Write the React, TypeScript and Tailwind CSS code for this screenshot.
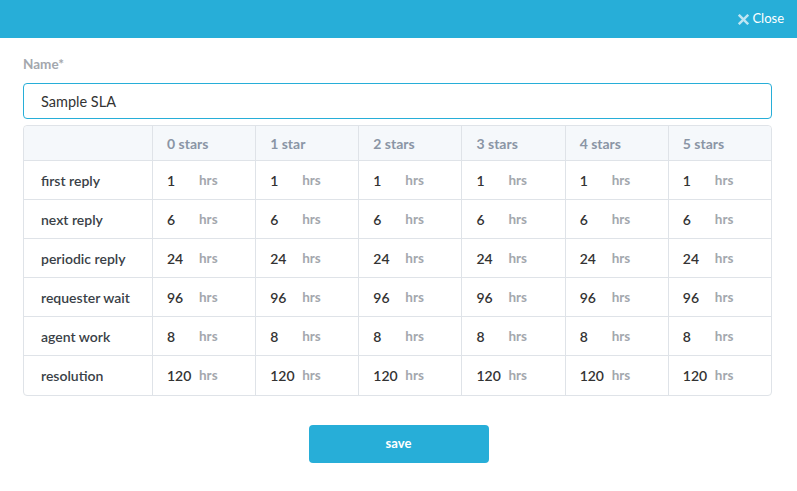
import React from 'react';

const cols = ['0 stars', '1 star', '2 stars', '3 stars', '4 stars', '5 stars'];
const rows: [string, string][] = [
  ['first reply', '1'],
  ['next reply', '6'],
  ['periodic reply', '24'],
  ['requester wait', '96'],
  ['agent work', '8'],
  ['resolution', '120'],
];

export default function App() {
  return (
    <div className="w-[797px] h-[491px] bg-white text-[13px] font-['Lato','Liberation_Sans',sans-serif]">
      {/* top bar */}
      <div className="h-[38px] bg-[#27aed8] flex items-center justify-end pr-[13px]">
        <button className="flex items-center gap-[3px] text-white text-[13px]">
          <svg width="11" height="11" viewBox="0 0 10 10" className="mt-[1px]">
            <path d="M1.5 1.5 L8.5 8.5 M8.5 1.5 L1.5 8.5" stroke="#bfe6f3" strokeWidth="2.2" strokeLinecap="square" />
          </svg>
          Close
        </button>
      </div>

      <div className="px-[23px] pt-[17px]">
        <label className="block text-[13.5px] font-bold text-[#a3a7ad] leading-[18px]">Name*</label>
        <input
          defaultValue="Sample SLA"
          className="mt-[10px] w-[749px] h-[36px] border border-[#27aed8] rounded-[4px] px-[17px] text-[14.5px] text-[#333] outline-none"
        />

        <table className="mt-[6px] w-[749px] border-separate border-spacing-0 border border-[#dfe3e8] rounded-[4px] table-fixed">
          <colgroup>
            <col className="w-[128px]" />
            {cols.map((c) => (
              <col key={c} />
            ))}
          </colgroup>
          <thead>
            <tr className="h-[35px] bg-[#f5f8fb]">
              <th className="border-b border-[#dfe3e8] rounded-tl-[4px]"></th>
              {cols.map((c, i) => (
                <th
                  key={c}
                  className={`text-left text-[14px] font-bold text-[#8a95a5] pl-[14px] border-b border-l border-[#dfe3e8] ${i === cols.length - 1 ? 'rounded-tr-[4px]' : ''}`}
                >
                  {c}
                </th>
              ))}
            </tr>
          </thead>
          <tbody>
            {rows.map(([label, v], r) => (
              <tr key={label} className="h-[39px]">
                <td className={`pl-[17px] text-[14px] text-[#3a3f47] font-semibold ${r < rows.length - 1 ? 'border-b border-[#dfe3e8]' : ''}`}>
                  {label}
                </td>
                {cols.map((c) => (
                  <td
                    key={c}
                    className={`pl-[14px] border-l border-[#dfe3e8] ${r < rows.length - 1 ? 'border-b' : ''}`}
                  >
                    <div className="flex items-center">
                      <span className="w-[32px] text-[14px] text-[#333] font-semibold">{v}</span>
                      <span className="text-[13.5px] text-[#a3a7ad] font-bold">hrs</span>
                    </div>
                  </td>
                ))}
              </tr>
            ))}
          </tbody>
        </table>

        <div className="flex justify-center mt-[29px]">
          <button className="w-[180px] h-[38px] bg-[#27aed8] rounded-[4px] text-white font-bold text-[13px]">
            save
          </button>
        </div>
      </div>
    </div>
  );
}
